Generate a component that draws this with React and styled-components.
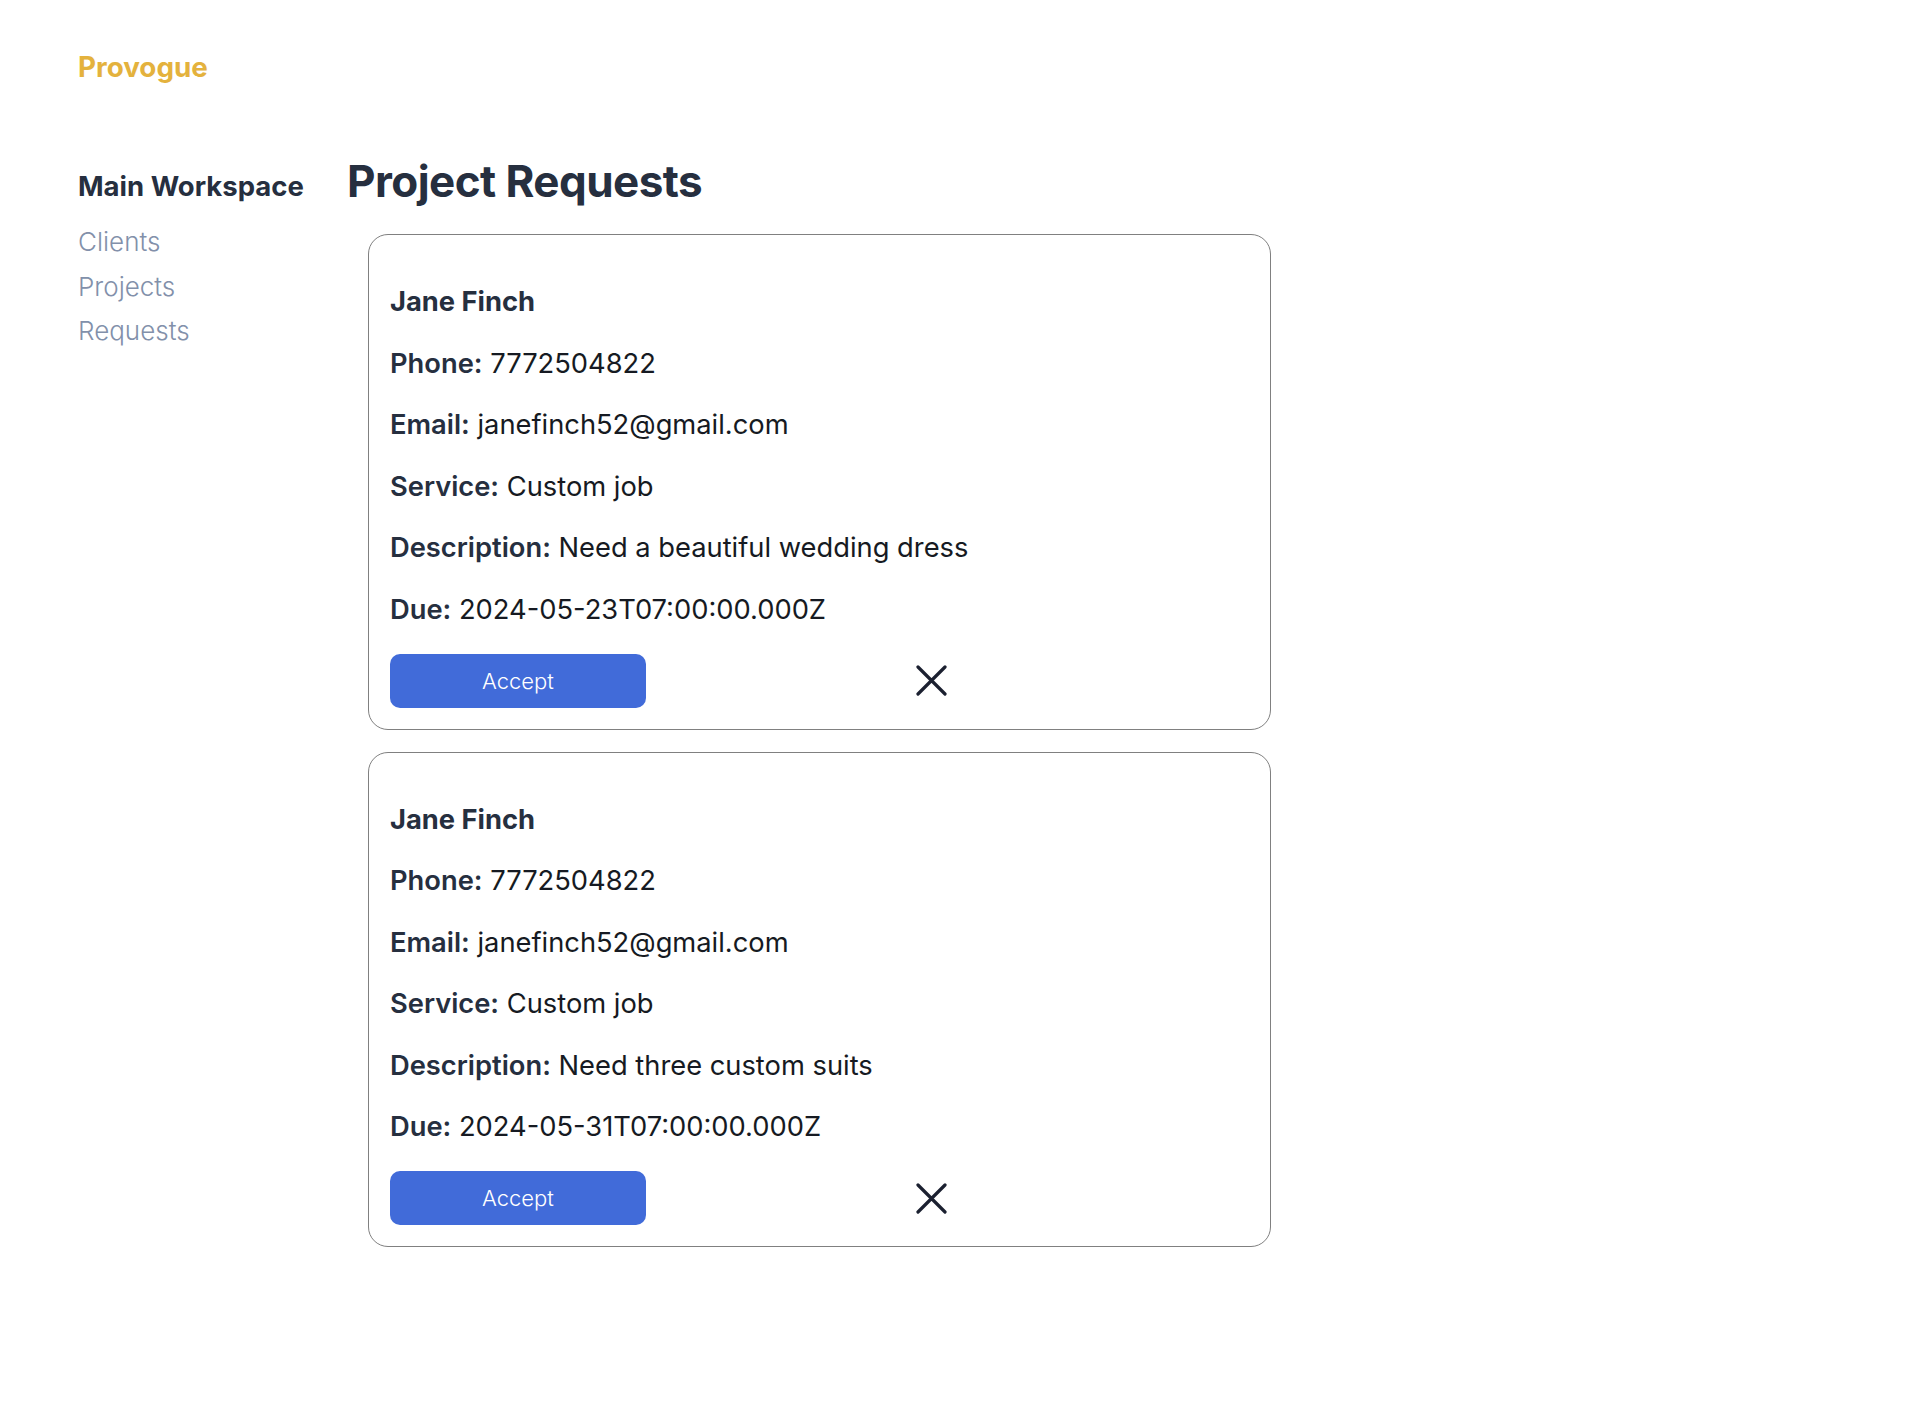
import React from "react";
import styled, { createGlobalStyle } from "styled-components";

const requests = [
  {
    id: 1,
    name: "Jane Finch",
    phone: "7772504822",
    email: "janefinch52@gmail.com",
    service: "Custom job",
    description: "Need a beautiful wedding dress",
    due: "2024-05-23T07:00:00.000Z",
  },
  {
    id: 2,
    name: "Jane Finch",
    phone: "7772504822",
    email: "janefinch52@gmail.com",
    service: "Custom job",
    description: "Need three custom suits",
    due: "2024-05-31T07:00:00.000Z",
  },
];

function CloseIcon() {
  return (
    <svg width="31" height="31" viewBox="0 0 31 31" fill="none">
      <path
        d="M2 2L29 29M29 2L2 29"
        stroke="#1b2030"
        strokeWidth="3.2"
        strokeLinecap="round"
      />
    </svg>
  );
}

function RequestCard({ request }) {
  return (
    <Card>
      <Rows>
        <Name>{request.name}</Name>
        <Row>
          <Label>Phone:</Label> {request.phone}
        </Row>
        <Row>
          <Label>Email:</Label> {request.email}
        </Row>
        <Row>
          <Label>Service:</Label> {request.service}
        </Row>
        <Row>
          <Label>Description:</Label> {request.description}
        </Row>
        <Row>
          <Label>Due:</Label> {request.due}
        </Row>
      </Rows>
      <Actions>
        <AcceptButton>Accept</AcceptButton>
        <DeclineButton aria-label="Decline">
          <CloseIcon />
        </DeclineButton>
      </Actions>
    </Card>
  );
}

export default function App() {
  return (
    <>
      <GlobalStyle />
      <Page>
        <Brand>Provogue</Brand>
        <Layout>
          <Sidebar>
            <SideTitle>Main Workspace</SideTitle>
            <SideLink>Clients</SideLink>
            <SideLink>Projects</SideLink>
            <SideLink>Requests</SideLink>
          </Sidebar>
          <Main>
            <Heading>Project Requests</Heading>
            <CardList>
              {requests.map((r) => (
                <RequestCard key={r.id} request={r} />
              ))}
            </CardList>
          </Main>
        </Layout>
      </Page>
    </>
  );
}

const GlobalStyle = createGlobalStyle`
  * {
    box-sizing: border-box;
  }
  body {
    margin: 0;
    background: #ffffff;
    font-family: Inter, "Noto Sans", sans-serif;
  }
`;

const Page = styled.div`
  padding: 51px 0 0 78px;
  min-height: 1428px;
`;

const Brand = styled.div`
  font-size: 27.8px;
  line-height: 32px;
  font-weight: 700;
  color: #e4b23d;
`;

const Layout = styled.div`
  display: flex;
  margin-top: 71px;
`;

const Sidebar = styled.nav`
  width: 269px;
  flex-shrink: 0;
  display: flex;
  flex-direction: column;
  padding-top: 16px;
`;

const SideTitle = styled.div`
  font-size: 27.5px;
  line-height: 32px;
  font-weight: 700;
  color: #262f3f;
  margin-bottom: 18px;
`;

const SideLink = styled.a`
  font-size: 26px;
  line-height: 44.6px;
  font-weight: 300;
  color: #8290aa;
  cursor: pointer;
`;

const Main = styled.main`
  display: flex;
  flex-direction: column;
`;

const Heading = styled.h1`
  margin: 0;
  font-size: 44px;
  line-height: 54px;
  font-weight: 700;
  letter-spacing: -0.55px;
  color: #262f3f;
`;

const CardList = styled.div`
  display: flex;
  flex-direction: column;
  gap: 22px;
  margin: 26px 0 0 21px;
`;

const Card = styled.div`
  width: 903px;
  border: 1px solid #808080;
  border-radius: 20px;
  padding: 47px 21px 21px;
`;

const Rows = styled.div`
  display: flex;
  flex-direction: column;
  gap: 21.5px;
`;

const Row = styled.div`
  font-size: 27.3px;
  line-height: 40px;
  height: 40px;
  font-weight: 400;
  color: #161a22;
`;

const Name = styled(Row)`
  font-weight: 700;
  color: #262f3f;
`;

const Label = styled.span`
  font-weight: 600;
  color: #262f3f;
`;

const Actions = styled.div`
  display: flex;
  align-items: center;
  gap: 270px;
  margin-top: 24px;
`;

const AcceptButton = styled.button`
  width: 256px;
  height: 54px;
  border: none;
  border-radius: 10px;
  background-color: #416bd9;
  color: #ffffff;
  font-family: Inter, "Noto Sans", sans-serif;
  font-size: 22px;
  font-weight: 300;
  cursor: pointer;
`;

const DeclineButton = styled.button`
  display: flex;
  align-items: center;
  justify-content: center;
  width: 31px;
  height: 31px;
  padding: 0;
  border: none;
  background: none;
  cursor: pointer;
`;
